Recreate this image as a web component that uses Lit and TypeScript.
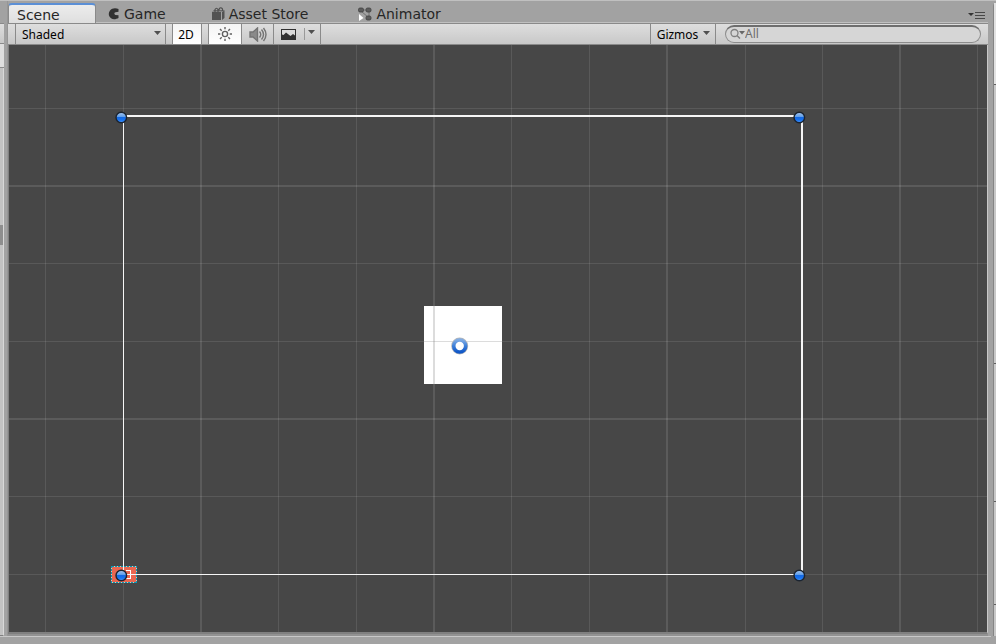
import { LitElement, html, css, svg } from "lit";
import { customElement } from "lit/decorators.js";

const COLUMNS = [
  { at: 36 }, { at: 114 }, { at: 191, major: true }, { at: 269 }, { at: 347 },
  { at: 424, major: true }, { at: 502 }, { at: 580 }, { at: 657, major: true },
  { at: 736 }, { at: 813 }, { at: 890, major: true }, { at: 968 },
];
const ROWS = [
  { at: 63 }, { at: 140, major: true }, { at: 218 }, { at: 296 },
  { at: 373, major: true }, { at: 451 }, { at: 529 },
];
const HANDLES = [[112, 72], [790, 72], [112, 530], [790, 530]];

@customElement("scene-view")
class SceneView extends LitElement {
  static styles = css`
    :host { display: block; background: #474747; overflow: hidden; min-width: 0; }
    svg { display: block; width: 100%; height: 100%; }
    .grid { fill: #ffffff; fill-opacity: 0.1; }
    .grid .major { fill-opacity: 0.11; }
    .over { fill: #808080; fill-opacity: 0.28; }
    .line { fill: #f6f6f6; }
  `;
  render() {
    return html`
      <svg role="img" aria-label="Scene canvas" shape-rendering="crispEdges">
        <defs>
          <linearGradient id="knob" x1="0" y1="0" x2="0" y2="1">
            <stop offset="0" stop-color="#a9c8ee" />
            <stop offset="0.45" stop-color="#5c9cea" />
            <stop offset="0.5" stop-color="#1469e4" />
            <stop offset="0.75" stop-color="#1672f0" />
            <stop offset="1" stop-color="#59a2ff" />
          </linearGradient>
          <linearGradient id="ring" x1="0" y1="0" x2="0" y2="1">
            <stop offset="0" stop-color="#7fabe4" />
            <stop offset="0.5" stop-color="#3d7fd8" />
            <stop offset="1" stop-color="#1158c8" />
          </linearGradient>
        </defs>
        <g class="grid">
          ${COLUMNS.map((c) => svg`<rect class=${c.major ? "major" : ""} x=${c.at} y="0" width=${c.major ? 2 : 1} height="100%"/>`)}
          ${ROWS.map((r) => svg`<rect class=${r.major ? "major" : ""} x="0" y=${r.at} width="100%" height=${r.major ? 2 : 1}/>`)}
        </g>
        <rect x="415" y="261" width="78" height="78" fill="#fff" />
        <g class="over">
          <rect x="424" y="261" width="2" height="78" />
          <rect x="415" y="296" width="78" height="1" />
        </g>
        <rect x="102" y="521" width="26" height="17" fill="#ea6650" />
        <rect x="102.5" y="521.5" width="25" height="16" fill="none" stroke="#e8c0a8" />
        <rect x="102.5" y="521.5" width="25" height="16" fill="none" stroke="#0899b8" stroke-dasharray="2 1" />
        <path d="M117 525.5h4.500v8h-4.500" fill="none" stroke="#fff" />
        <g class="line">
          <rect x="114" y="70" width="680" height="2" />
          <rect x="792" y="70" width="2" height="460" />
          <rect x="114" y="70" width="1" height="460" />
          <rect x="114" y="529" width="680" height="1" />
        </g>
        <g shape-rendering="auto">
          ${HANDLES.map(([x, y]) => svg`<circle cx=${x + 0.3} cy=${y + 0.5} r="5.300" fill="url(#knob)" stroke="#1b2430" stroke-width="1.400"/>`)}
          <circle cx="450.700" cy="301" r="6.500" fill="#fff" stroke="#b8b8b8" stroke-width="4" />
          <circle cx="450.700" cy="301" r="6" fill="#fff" stroke="url(#ring)" stroke-width="3.600" />
        </g>
      </svg>`;
  }
}

@customElement("app-root")
class AppRoot extends LitElement {
  static styles = css`
    :host {
      display: grid; grid-template-columns: 8px minmax(0, 1fr) 8px; grid-template-rows: minmax(0, 1fr) 8px;
      height: 100vh; box-sizing: border-box; background: #a2a2a2; border-top: 1px solid #c0c0c0;
      font-family: "Noto Sans", sans-serif; font-size: 12px; color: #000;
    }
    * { box-sizing: border-box; }
    button, input { font: inherit; color: inherit; margin: 0; border: 0; padding: 0; background: none; border-radius: 0; }
    svg { display: block; flex: none; }
    .dock { display: flex; flex-direction: column; }
    .dock.left { padding: 22px 3px 0 0; border-right: 1px solid #969696; }
    .dock.left .bar { height: 21px; background: linear-gradient(#dedede, #c8c8c8); border-top: 1px solid #8a8a8a; border-bottom: 1px solid #8a8a8a; }
    .dock.left .row { height: 24px; background: #dedede; border-bottom: 1px solid #8a8a8a; }
    .dock.left .list { flex: 1; background: #c2c2c2; border-right: 1px solid #d8d8d8; border-bottom: 1px solid #808080; padding-top: 157px; }
    .thumb { width: 3px; height: 20px; background: #8e8e8e; }
    .dock.right { padding: 2px 0 0 5px; }
    .dock.right .list { flex: 1; border-left: 1px solid #858585; background: #c8c8c8; border-radius: 4px 0 0 0; display: grid; grid-template-rows: 82px 279px 138px 103px 1fr; }
    .dock.right .list div { border-bottom: 1px solid #606060; }
    .dock.right .list div:first-child { background: #e2e2e2; }
    .dock.right .list div:last-child { border: 0; }
    .panel { display: flex; flex-direction: column; min-width: 0; border-bottom: 2px solid #929292; }
    .tabs { display: flex; height: 22px; padding-top: 2px; align-items: stretch; border-bottom: 1px solid #c0c0c0; font: 14px/20px "DejaVu Sans", sans-serif; color: #262626; }
    .tab { display: flex; align-items: center; gap: 4px; white-space: nowrap; padding: 2px 12px 0; line-height: 18px; }
    .tab.active { width: 88px; height: 21px; padding: 0 8px; background: linear-gradient(#ececec, #dedede); border: 1px solid #8a8a8a; border-top: 2px solid #5b8fd6; border-bottom: 0; border-radius: 4px 4px 0 0; }
    .tab.game { margin-right: 22px; }
    .tab.store { margin-right: 26px; }
    .menu { margin: 4px 3px 0 auto; align-self: center; }
    .toolbar { display: flex; height: 22px; border-top: 1px solid #8a8a8a; border-bottom: 1px solid #8a8a8a; background: linear-gradient(#dedede, #c8c8c8); padding-left: 7px; line-height: 20px; }
    .toolbar button { display: flex; align-items: center; justify-content: center; border-right: 1px solid #8a8a8a; flex: none; }
    .toolbar .first { border-left: 1px solid #8a8a8a; }
    .toolbar .on { background: linear-gradient(#f4f4f4, #ffffff); }
    .toolbar .shade { width: 151px; justify-content: space-between; padding: 2px 4px 0 6px; }
    .toolbar .dim { width: 30px; margin: 0 6px; padding: 2px 2px 0 0; }
    .toolbar .light { width: 34px; }
    .toolbar .sound { width: 32px; }
    .toolbar .fx { width: 47px; gap: 8px; padding-left: 2px; }
    .bar-line { width: 1px; height: 12px; background: #999; }
    .arrow { margin-bottom: 4px; }
    .fx .parts { display: flex; align-items: center; gap: 3px; }
    .toolbar .gizmos { width: 66px; margin-left: auto; gap: 5px; padding: 2px 0 0 1px; }
    .search { display: flex; align-items: center; width: 256px; height: 18px; margin: 1px 7px 0 9px; padding: 0 8px 2px 4px; border: 1px solid #8c8c8c; border-top: 2px solid #6e6e6e; border-radius: 9px; background: #d6d6d6; color: #6e6e6e; }
    .search input { flex: 1; min-width: 0; height: 15px; line-height: 15px; outline: 0; }
    .search input::placeholder { color: #6e6e6e; opacity: 1; }
    .view { flex: 1; min-height: 0; display: flex; border: 1px solid #808080; border-top: 0; border-bottom-width: 2px; border-right-color: #c8c8c8; }
    scene-view { flex: 1; }
    .footer { grid-column: 1 / -1; margin-right: 5px; border-top: 1px solid #c8c8c8; }
  `;
  arrow() {
    return html`<svg class="arrow" width="7" height="4" viewBox="0 0 7 4"><path d="M0 0h7L3.500 4z" fill="#505050" /></svg>`;
  }
  render() {
    return html`
      <div class="dock left"><div class="bar"></div><div class="row"></div><div class="list"><div class="thumb"></div></div></div>
      <main class="panel">
        <nav class="tabs">
          <button class="tab active">Scene</button>
          <button class="tab game">
            <svg width="12" height="12" viewBox="0 0 12 12"><path d="M10.500 1C8-.3 4-.3 2 2.500S.5 8.500 3 10.300s5.500.7 7.500-.3V7.300L7.500 7C6 6.700 6 4.500 7.500 4.300L10.500 3.800z" fill="#303030" /></svg>
            Game</button>
          <button class="tab store">
            <svg width="13" height="13" viewBox="0 0 13 13"><path d="M0 5h9v8H0zM10 5l2.500-1.500V11L10 13z" fill="#525252" /><path d="M0 4.500L2 3h11l-2.500 1.500z" fill="#686868" /><path d="M3 5V2.500Q4.500 0 6 2.500V5M7 3.500Q7 .5 9 .8T10.500 4" fill="none" stroke="#505050" stroke-width="1.200" /></svg>
            Asset Store</button>
          <button class="tab">
            <svg width="14" height="14" viewBox="0 0 14 14"><path d="M3 3h8v8L3 4" fill="none" stroke="#707070" /><g fill="#5c5c5c" stroke="#404040" stroke-width=".8"><rect x=".5" y="1" width="5" height="4" rx="1.500" /><rect x="8" y="1" width="5" height="4" rx="1.500" /><rect x="8" y="9" width="5" height="4" rx="1.500" /></g><path d="M1 7l4.500 4L1 14z" fill="#fff" /></svg>
            Animator</button>
          <button class="menu" aria-label="Panel menu"><svg width="17" height="8" viewBox="0 0 17 8"><path d="M0 2h6L3 5z" fill="#333" /><path d="M7 1.500h10M7 4.500h10M7 7.500h10" stroke="#484848" /></svg></button>
        </nav>
        <div class="toolbar">
          <button class="first shade">Shaded ${this.arrow()}</button>
          <button class="first on dim">2D</button>
          <button class="first on light" aria-label="Lighting">
            <svg width="14" height="14" viewBox="0 0 14 14" fill="none" stroke="#606060" stroke-width="1.400"><circle cx="7" cy="7" r="2.600" /><path d="M7 0v2.300M7 11.700V14M0 7h2.300M11.700 7H14M2 2l1.700 1.700M10.300 10.300L12 12M2 12l1.700-1.700M10.300 3.700L12 2" /></svg></button>
          <button class="sound" aria-label="Audio">
            <svg width="18" height="15" viewBox="0 0 18 15" fill="none" stroke="#747474" stroke-width="1.400"><path d="M1 5h3l4.500-4v13L4 10H1z" fill="#8a8a8a" /><path d="M10.500 4.500q2.500 3 0 6M12.500 2.500q4 5 0 10M14.500 1q5 6.500 0 13" /></svg></button>
          <button class="fx" aria-label="Effects">
            <svg width="15" height="11" viewBox="0 0 15 11"><rect width="15" height="11" fill="#303030" /><path d="M1 1h13v5.500L12 5 9.500 7 5 3.500 2.500 6 1 5.500z" fill="#dadada" /></svg>
            <span class="parts"><span class="bar-line"></span>${this.arrow()}</span></button>
          <button class="first gizmos">Gizmos ${this.arrow()}</button>
          <label class="search">
            <svg width="15" height="11" viewBox="0 0 15 11"><circle cx="4.500" cy="5" r="3.500" fill="none" stroke="#808080" stroke-width="1.300" /><path d="M7 7.500l3 3" stroke="#808080" stroke-width="1.500" /><path d="M9 3h6l-3 3.500z" fill="#686868" /></svg>
            <input type="text" placeholder="All" aria-label="Search scene" />
          </label>
        </div>
        <div class="view"><scene-view></scene-view></div>
      </main>
      <div class="dock right"><div class="list"><div></div><div></div><div></div><div></div><div></div></div></div>
      <div class="footer"></div>`;
  }
}
